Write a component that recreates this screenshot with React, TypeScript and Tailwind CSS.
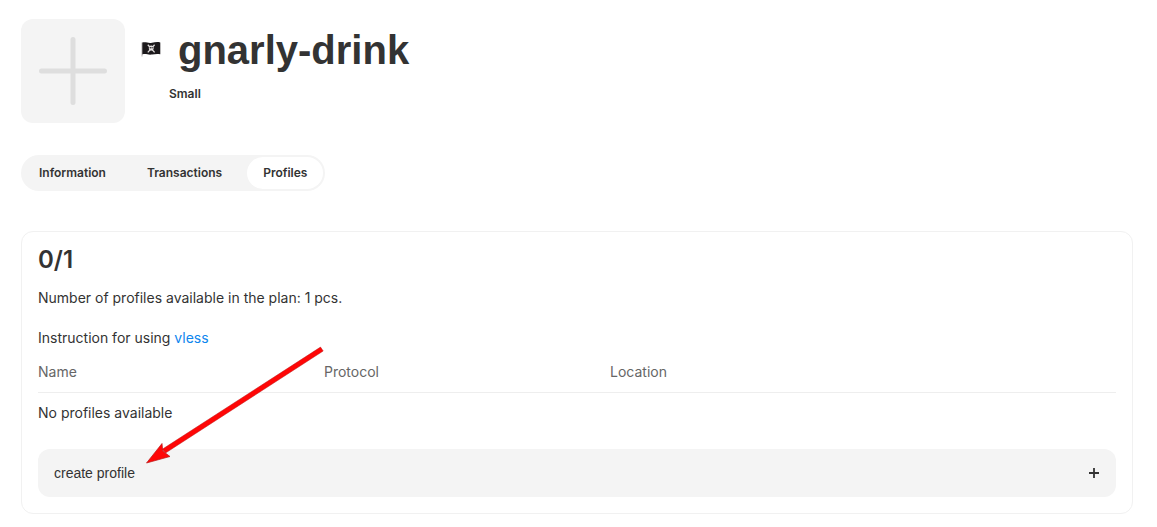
const tabs = ["Information", "Transactions", "Profiles"];
const columns = ["Name", "Protocol", "Location"];

function PirateFlag() {
  return (
    <svg viewBox="0 0 20 19" className="h-[19px] w-5 shrink-0" role="img" aria-label="Pirate flag">
      <path d="M1 1.5V15.5" stroke="#b9b4b4" strokeWidth="1" />
      <path d="M1.3 1.6C5 0.6 7 2.6 11 1.8C14 1.2 16 0.8 19.3 1.4V13.2C16 12.6 14 13 11 13.5C7 14.1 5 12.4 1.3 13.4Z" fill="#1c191b" />
      <path d="M6.8 3.8L13.6 11.4M13.6 3.8L6.8 11.4" stroke="#dedada" strokeWidth="1.3" />
      <ellipse cx="10.2" cy="7" rx="2.4" ry="2.6" fill="#e4e0e0" />
      <circle cx="9.3" cy="6.8" r="0.7" fill="#1c191b" />
      <circle cx="11.1" cy="6.8" r="0.7" fill="#1c191b" />
    </svg>
  );
}

function Header() {
  return (
    <header className="flex gap-4">
      <button
        type="button"
        aria-label="Add image"
        className="flex size-[104px] shrink-0 items-center justify-center rounded-xl bg-[#f4f4f4]"
      >
        <svg viewBox="0 0 68 68" className="size-[68px]" aria-hidden="true">
          <path d="M34 2.5V65.5M2.5 34H65.5" stroke="#dedede" strokeWidth="5" strokeLinecap="round" />
        </svg>
      </button>
      <div className="pt-[3px]">
        <div className="flex items-center gap-[17px]">
          <PirateFlag />
          <h1 className="font-['Liberation_Sans',Arial,sans-serif] text-[40px] leading-[56px] font-bold text-[#333333]">
            gnarly-drink
          </h1>
        </div>
        <p className="pt-2 pl-7 text-xs leading-4 font-semibold">Small</p>
      </div>
    </header>
  );
}

function Tabs() {
  return (
    <nav className="mt-8 flex h-9 w-fit gap-[9px] rounded-full bg-[#f4f4f4] p-0.5" role="tablist">
      {tabs.map((tab) => (
        <button
          key={tab}
          type="button"
          role="tab"
          aria-selected={tab === "Profiles"}
          className="rounded-full px-4 text-xs font-semibold aria-selected:bg-white"
        >
          {tab}
        </button>
      ))}
    </nav>
  );
}

function Arrow() {
  return (
    <svg
      viewBox="0 0 180 120"
      className="pointer-events-none absolute top-[113px] left-[122px] h-[120px] w-[180px]"
      aria-hidden="true"
    >
      <path d="M176.5 2.1L179.2 6L21.5 108L18.2 104.3Z" fill="#ff0606" stroke="#b91919" strokeWidth="0.5" />
      <path d="M2.5 118L18 98.5L18.8 106L26 111.5Z" fill="#ff0606" stroke="#b91919" strokeWidth="0.7" />
    </svg>
  );
}

export default function App() {
  return (
    <main className="bg-white pt-[19px] pr-6 pb-3 pl-[21px] font-[Inter,sans-serif] text-sm text-[#333333]">
      <Header />
      <Tabs />
      <section className="relative mt-10 rounded-xl border border-[#f1f1f1] p-4 pt-3">
        <h2 className="text-2xl leading-8 font-semibold">0/1</h2>
        <p className="mt-3 leading-5">Number of profiles available in the plan: 1 pcs.</p>
        <p className="mt-5 leading-5">
          Instruction for using{" "}
          <a href="#vless" className="text-[#0d86ee]">
            vless
          </a>
        </p>
        <table className="mt-1 w-full table-fixed">
          <thead>
            <tr className="border-b border-[#eeeeee] text-left text-[#666666]">
              {columns.map((column) => (
                <th key={column} className="w-[286px] py-2.5 leading-5 font-normal">
                  {column}
                </th>
              ))}
              <th aria-label="Actions" />
            </tr>
          </thead>
          <tbody>
            <tr>
              <td colSpan={4} className="py-2.5 leading-5">
                No profiles available
              </td>
            </tr>
          </tbody>
        </table>
        <button
          type="button"
          className="mt-4 flex h-12 w-full items-center justify-between rounded-xl bg-[#f4f4f4] px-4 font-['Liberation_Sans',Arial,sans-serif]"
        >
          <span>create profile</span>
          <svg viewBox="0 0 12 12" className="size-3" aria-hidden="true">
            <path d="M6 1V11M1 6H11" stroke="#333333" strokeWidth="1.8" />
          </svg>
        </button>
        <Arrow />
      </section>
    </main>
  );
}
